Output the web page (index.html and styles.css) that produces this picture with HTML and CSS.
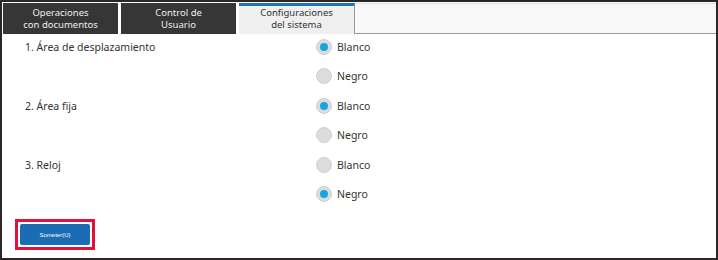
FILE: index.html
```html
<!DOCTYPE html>
<html>
<head>
<meta name="viewport" content="width=device-width, initial-scale=1">
<link rel="stylesheet" href="styles.css">
</head>
<body>

<div class="frame">
  <div class="tabbar">
    <div class="tab">Operaciones<br>con documentos</div>
    <div class="tab">Control de<br>Usuario</div>
    <div class="tab active">Configuraciones<br>del sistema</div>
    <div class="tabfill"></div>
  </div>

  <div class="settings">
    <div class="label">1. Área de desplazamiento</div>
    <label class="opt"><span class="radio on"></span>Blanco</label>
    <label class="opt"><span class="radio"></span>Negro</label>

    <div class="label">2. Área fija</div>
    <label class="opt"><span class="radio on"></span>Blanco</label>
    <label class="opt"><span class="radio"></span>Negro</label>

    <div class="label">3. Reloj</div>
    <label class="opt"><span class="radio"></span>Blanco</label>
    <label class="opt"><span class="radio on"></span>Negro</label>
  </div>

  <div class="actions">
    <div class="focus">
      <button type="button">Someter(U)</button>
    </div>
  </div>
</div>

</body>
</html>
```

FILE: styles.css
```css
body {
    margin: 0;
    font-family: "Noto Sans", "Open Sans", sans-serif;
    color: #333;
    background: #fff;
}

.frame {
    width: 718px;
    height: 260px;
    box-sizing: border-box;
    border: 2px solid #2b2626;
}

.tabbar {
    display: flex;
    gap: 3px;
    padding: 1px 0 0 1px;
    height: 32px;
    box-sizing: border-box;
}

.tab {
    width: 115px;
    height: 31px;
    box-sizing: border-box;
    background: #363636;
    color: #eee;
    font-size: 9.5px;
    line-height: 12px;
    text-align: center;
    padding-top: 4px;
}

.tab.active {
    width: 116px;
    background: #efefef;
    color: #333;
    border-top: 3px solid #1b74c1;
    border-right: 1px solid #999;
    padding-top: 1px;
}

.tabfill {
    flex: 1;
    margin-left: -3px;
    background: #f8f8f8;
    border-top: 1px solid #ddd;
    border-bottom: 1px solid #9a9a9a;
    height: 31px;
    box-sizing: border-box;
}

.settings {
    display: grid;
    grid-template-columns: 291px auto;
    grid-auto-rows: 18px;
    row-gap: 11.6px;
    padding: 3.5px 0 0 23px;
    font-size: 10.5px;
}

.label {
    grid-row: span 2;
    line-height: 18px;
}

.opt {
    grid-column: 2;
    display: flex;
    align-items: center;
    gap: 5px;
}

.radio {
    width: 16px;
    height: 16px;
    box-sizing: border-box;
    border-radius: 50%;
    background: #dcdcdc;
    border: 1px solid #d0d0d0;
    display: flex;
    align-items: center;
    justify-content: center;
}

.radio.on::after {
    content: "";
    width: 8px;
    height: 8px;
    border-radius: 50%;
    background: #16a6de;
}

.actions {
    padding: 16px 0 0 13px;
}

.focus {
    display: inline-block;
    border: 3px solid #e2113c;
    padding: 2px;
    background: #fff;
}

button {
    display: block;
    width: 70px;
    height: 21px;
    background: #1a6db5;
    color: #fff;
    border: none;
    border-radius: 2px;
    font-family: "Liberation Sans", sans-serif;
    font-size: 6px;
    padding: 0;
}
```
